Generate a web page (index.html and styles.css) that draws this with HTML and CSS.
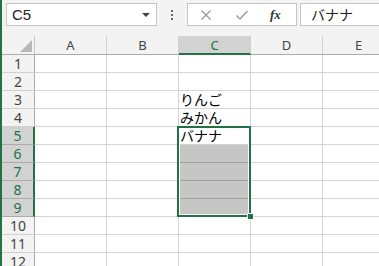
FILE: index.html
```html
<!DOCTYPE html>
<html lang="ja">
<head>
<meta charset="utf-8">
<link rel="stylesheet" href="styles.css">
</head>
<body>
<div class="app">
  <div class="toolbar">
    <div class="namebox">
      <span class="name">C5</span>
      <span class="arrow"></span>
    </div>
    <div class="dots"><i></i><i></i><i></i></div>
    <div class="buttons">
      <svg class="ico" width="12" height="12" viewBox="0 0 12 12"><path d="M1.5 1.5 L10.5 10.5 M10.5 1.5 L1.5 10.5" stroke="#9a9a9a" stroke-width="1.3" fill="none"/></svg>
      <svg class="ico" width="14" height="12" viewBox="0 0 14 12"><path d="M1.5 6.5 L5 10 L12.5 2" stroke="#9a9a9a" stroke-width="1.5" fill="none"/></svg>
      <span class="fx">fx</span>
    </div>
    <div class="formula">バナナ</div>
  </div>
  <div class="sheet">
    <div class="grid">
      <div class="corner"><span class="tri"></span></div>
      <div class="ch">A</div><div class="ch">B</div><div class="ch sel">C</div><div class="ch">D</div><div class="ch">E</div>

      <div class="rh">1</div><div class="c"></div><div class="c"></div><div class="c"></div><div class="c"></div><div class="c"></div>
      <div class="rh">2</div><div class="c"></div><div class="c"></div><div class="c"></div><div class="c"></div><div class="c"></div>
      <div class="rh">3</div><div class="c"></div><div class="c"></div><div class="c txt">りんご</div><div class="c"></div><div class="c"></div>
      <div class="rh">4</div><div class="c"></div><div class="c"></div><div class="c txt">みかん</div><div class="c"></div><div class="c"></div>
      <div class="rh sel">5</div><div class="c"></div><div class="c"></div><div class="c txt">バナナ</div><div class="c"></div><div class="c"></div>
      <div class="rh sel">6</div><div class="c"></div><div class="c"></div><div class="c hl"></div><div class="c"></div><div class="c"></div>
      <div class="rh sel">7</div><div class="c"></div><div class="c"></div><div class="c hl"></div><div class="c"></div><div class="c"></div>
      <div class="rh sel">8</div><div class="c"></div><div class="c"></div><div class="c hl"></div><div class="c"></div><div class="c"></div>
      <div class="rh sel">9</div><div class="c"></div><div class="c"></div><div class="c hl"></div><div class="c"></div><div class="c"></div>
      <div class="rh">10</div><div class="c"></div><div class="c"></div><div class="c"></div><div class="c"></div><div class="c"></div>
      <div class="rh">11</div><div class="c"></div><div class="c"></div><div class="c"></div><div class="c"></div><div class="c"></div>
      <div class="rh">12</div><div class="c"></div><div class="c"></div><div class="c"></div><div class="c"></div><div class="c"></div>
    </div>
    <div class="selection"><span class="handle"></span></div>
  </div>
</div>
</body>
</html>
```

FILE: styles.css
```css
html, body {
  margin: 0;
  padding: 0;
  width: 379px;
  height: 266px;
  overflow: hidden;
  background: #f3f3f3;
}
.app {
  height: 266px;
  border-left: 2px solid #217346;
  display: flex;
  flex-direction: column;
  font-family: "Noto Sans", "Liberation Sans", sans-serif;
}
.toolbar {
  height: 36px;
  flex: none;
  display: flex;
  align-items: flex-start;
  padding-top: 3px;
  padding-left: 4px;
  box-sizing: border-box;
}
.namebox {
  width: 151px;
  height: 23px;
  box-sizing: border-box;
  border: 1px solid #c6c6c6;
  background: #fff;
  display: flex;
  align-items: center;
  justify-content: space-between;
  padding: 0 6px 0 5px;
}
.name {
  font-size: 15px;
  color: #222;
  font-family: "Liberation Sans", sans-serif;
}
.arrow {
  width: 0;
  height: 0;
  border-left: 4px solid transparent;
  border-right: 4px solid transparent;
  border-top: 4px solid #444;
}
.dots {
  width: 30px;
  height: 23px;
  display: flex;
  flex-direction: column;
  align-items: center;
  justify-content: center;
  gap: 2px;
}
.dots i {
  display: block;
  width: 2px;
  height: 2px;
  background: #666;
}
.buttons {
  width: 110px;
  height: 23px;
  box-sizing: border-box;
  border: 1px solid #c6c6c6;
  background: #fff;
  display: flex;
  align-items: center;
  padding-left: 12px;
  gap: 23px;
}
.fx {
  font-family: "Liberation Serif", serif;
  font-style: italic;
  font-weight: bold;
  font-size: 13px;
  color: #333;
  margin-left: -2px;
}
.formula {
  margin-left: 3px;
  flex: 1;
  height: 23px;
  box-sizing: border-box;
  border: 1px solid #c6c6c6;
  border-right: none;
  background: #fff;
  padding-left: 10px;
  font-family: "Noto Sans CJK JP", sans-serif;
  font-size: 14px;
  line-height: 21px;
  color: #222;
}
.sheet {
  position: relative;
  flex: 1;
  overflow: hidden;
}
.grid {
  display: grid;
  grid-template-columns: 33px repeat(5, 72px);
  grid-template-rows: 19px repeat(12, 18px);
  background: #fff;
}
.grid > div {
  box-sizing: border-box;
}
.corner {
  background: #f3f3f3;
  border-right: 1px solid #c8c8c8;
  border-bottom: 1px solid #ababab;
  position: relative;
}
.tri {
  position: absolute;
  right: 2px;
  bottom: 2px;
  width: 0;
  height: 0;
  border-left: 12px solid transparent;
  border-bottom: 12px solid #b8b8b8;
}
.ch {
  background: #f3f3f3;
  border-right: 1px solid #d0d0d0;
  border-bottom: 1px solid #ababab;
  display: flex;
  align-items: center;
  justify-content: center;
  font-size: 13px;
  color: #444;
}
.ch.sel {
  background: #d2d2d2;
  border-bottom: 2px solid #217346;
  color: #217346;
}
.rh {
  background: #f3f3f3;
  border-right: 1px solid #ababab;
  border-bottom: 1px solid #d0d0d0;
  display: flex;
  align-items: center;
  justify-content: center;
  font-size: 14px;
  color: #444;
}
.rh.sel {
  background: #d2d2d2;
  border-right: 2px solid #217346;
  border-bottom-color: #ababab;
  color: #217346;
}
.c {
  border-right: 1px solid #d4d4d4;
  border-bottom: 1px solid #d4d4d4;
}
.c.hl {
  background: #c6c6c6;
  border-bottom-color: #9e9e9e;
}
.txt {
  font-family: "Noto Sans CJK JP", sans-serif;
  font-size: 14px;
  line-height: 17px;
  color: #000;
  padding-left: 1px;
  white-space: nowrap;
  overflow: visible;
}
.selection {
  position: absolute;
  left: 175px;
  top: 90px;
  width: 74px;
  height: 91px;
  box-sizing: border-box;
  border: 2px solid #217346;
  box-shadow: inset 0 0 0 1px #fff;
}
.handle {
  position: absolute;
  right: -5px;
  bottom: -5px;
  width: 7px;
  height: 7px;
  box-sizing: border-box;
  background: #217346;
  border: 1px solid #fff;
}
```
